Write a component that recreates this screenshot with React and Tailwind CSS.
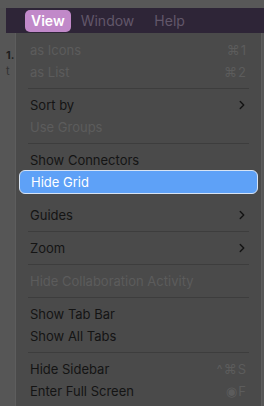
import { ChevronRight } from "lucide-react";

const Sep = () => <div className="mx-[12px] my-[5px] h-px bg-[#3d3d3d]" />;

function Item({ label, shortcut, sub, disabled }) {
    return (
        <div className="flex items-center justify-between h-[22px] pl-[14px] pr-[14px]">
            <span className={disabled ? "text-[#5c5c5c]" : "text-[#141414]"}>{label}</span>
            {shortcut && <span className="text-[#5c5c5c] tracking-[1px]">{shortcut}</span>}
            {sub && <ChevronRight className="w-[14px] h-[14px] text-[#141414] -mr-[2px]" strokeWidth={2.5} />}
        </div>
    );
}

export default function App() {
    return (
        <div className="w-[264px] h-[406px] bg-[#565656] overflow-hidden text-[13px] leading-none" style={{ fontFamily: "Inter, 'Liberation Sans', sans-serif" }}>
            {/* top strip */}
            <div className="h-[8px] bg-[#585858]" />

            {/* menu bar */}
            <div className="flex items-center h-[25px] bg-[#2e2537] ml-[6px] pl-[19px]">
                <div className="flex items-center h-[22px] px-[6px] rounded-[5px] bg-[#c189c9] text-white font-semibold text-[14px]">View</div>
                <span className="ml-[10px] text-[#62576a] text-[14px]">Window</span>
                <span className="ml-[20px] text-[#62576a] text-[14px]">Help</span>
            </div>

            <div className="flex">
                {/* doc background */}
                <div className="w-[15px] shrink-0 relative">
                    <span className="absolute left-[6px] top-[17px] text-[#1e1e1e] font-bold text-[11px]">1.</span>
                    <span className="absolute left-[6px] top-[33px] text-[#333] text-[11px]">t</span>
                </div>

                {/* menu */}
                <div className="flex-1 mr-[2px] h-[400px] bg-[#4a4a4a] border-l border-r border-[#5d5d5d] pt-[6px]">
                    <Item label="as Icons" shortcut="⌘1" disabled />
                    <Item label="as List" shortcut="⌘2" disabled />
                    <Sep />
                    <Item label="Sort by" sub />
                    <Item label="Use Groups" disabled />
                    <Sep />
                    <Item label="Show Connectors" />
                    <div className="mx-[3px] h-[24px] -mt-[1px] flex items-center pl-[11px] rounded-[6px] bg-[#5ea1f7] border border-[#d8e4f4] text-white">
                        Hide Grid
                    </div>
                    <div className="h-[10px]" />
                    <Item label="Guides" sub />
                    <Sep />
                    <Item label="Zoom" sub />
                    <Sep />
                    <Item label="Hide Collaboration Activity" disabled />
                    <Sep />
                    <Item label="Show Tab Bar" />
                    <Item label="Show All Tabs" />
                    <Sep />
                    <Item label="Hide Sidebar" shortcut="^⌘S" />
                    <Item label="Enter Full Screen" shortcut="◉F" />
                </div>
            </div>
        </div>
    );
}
